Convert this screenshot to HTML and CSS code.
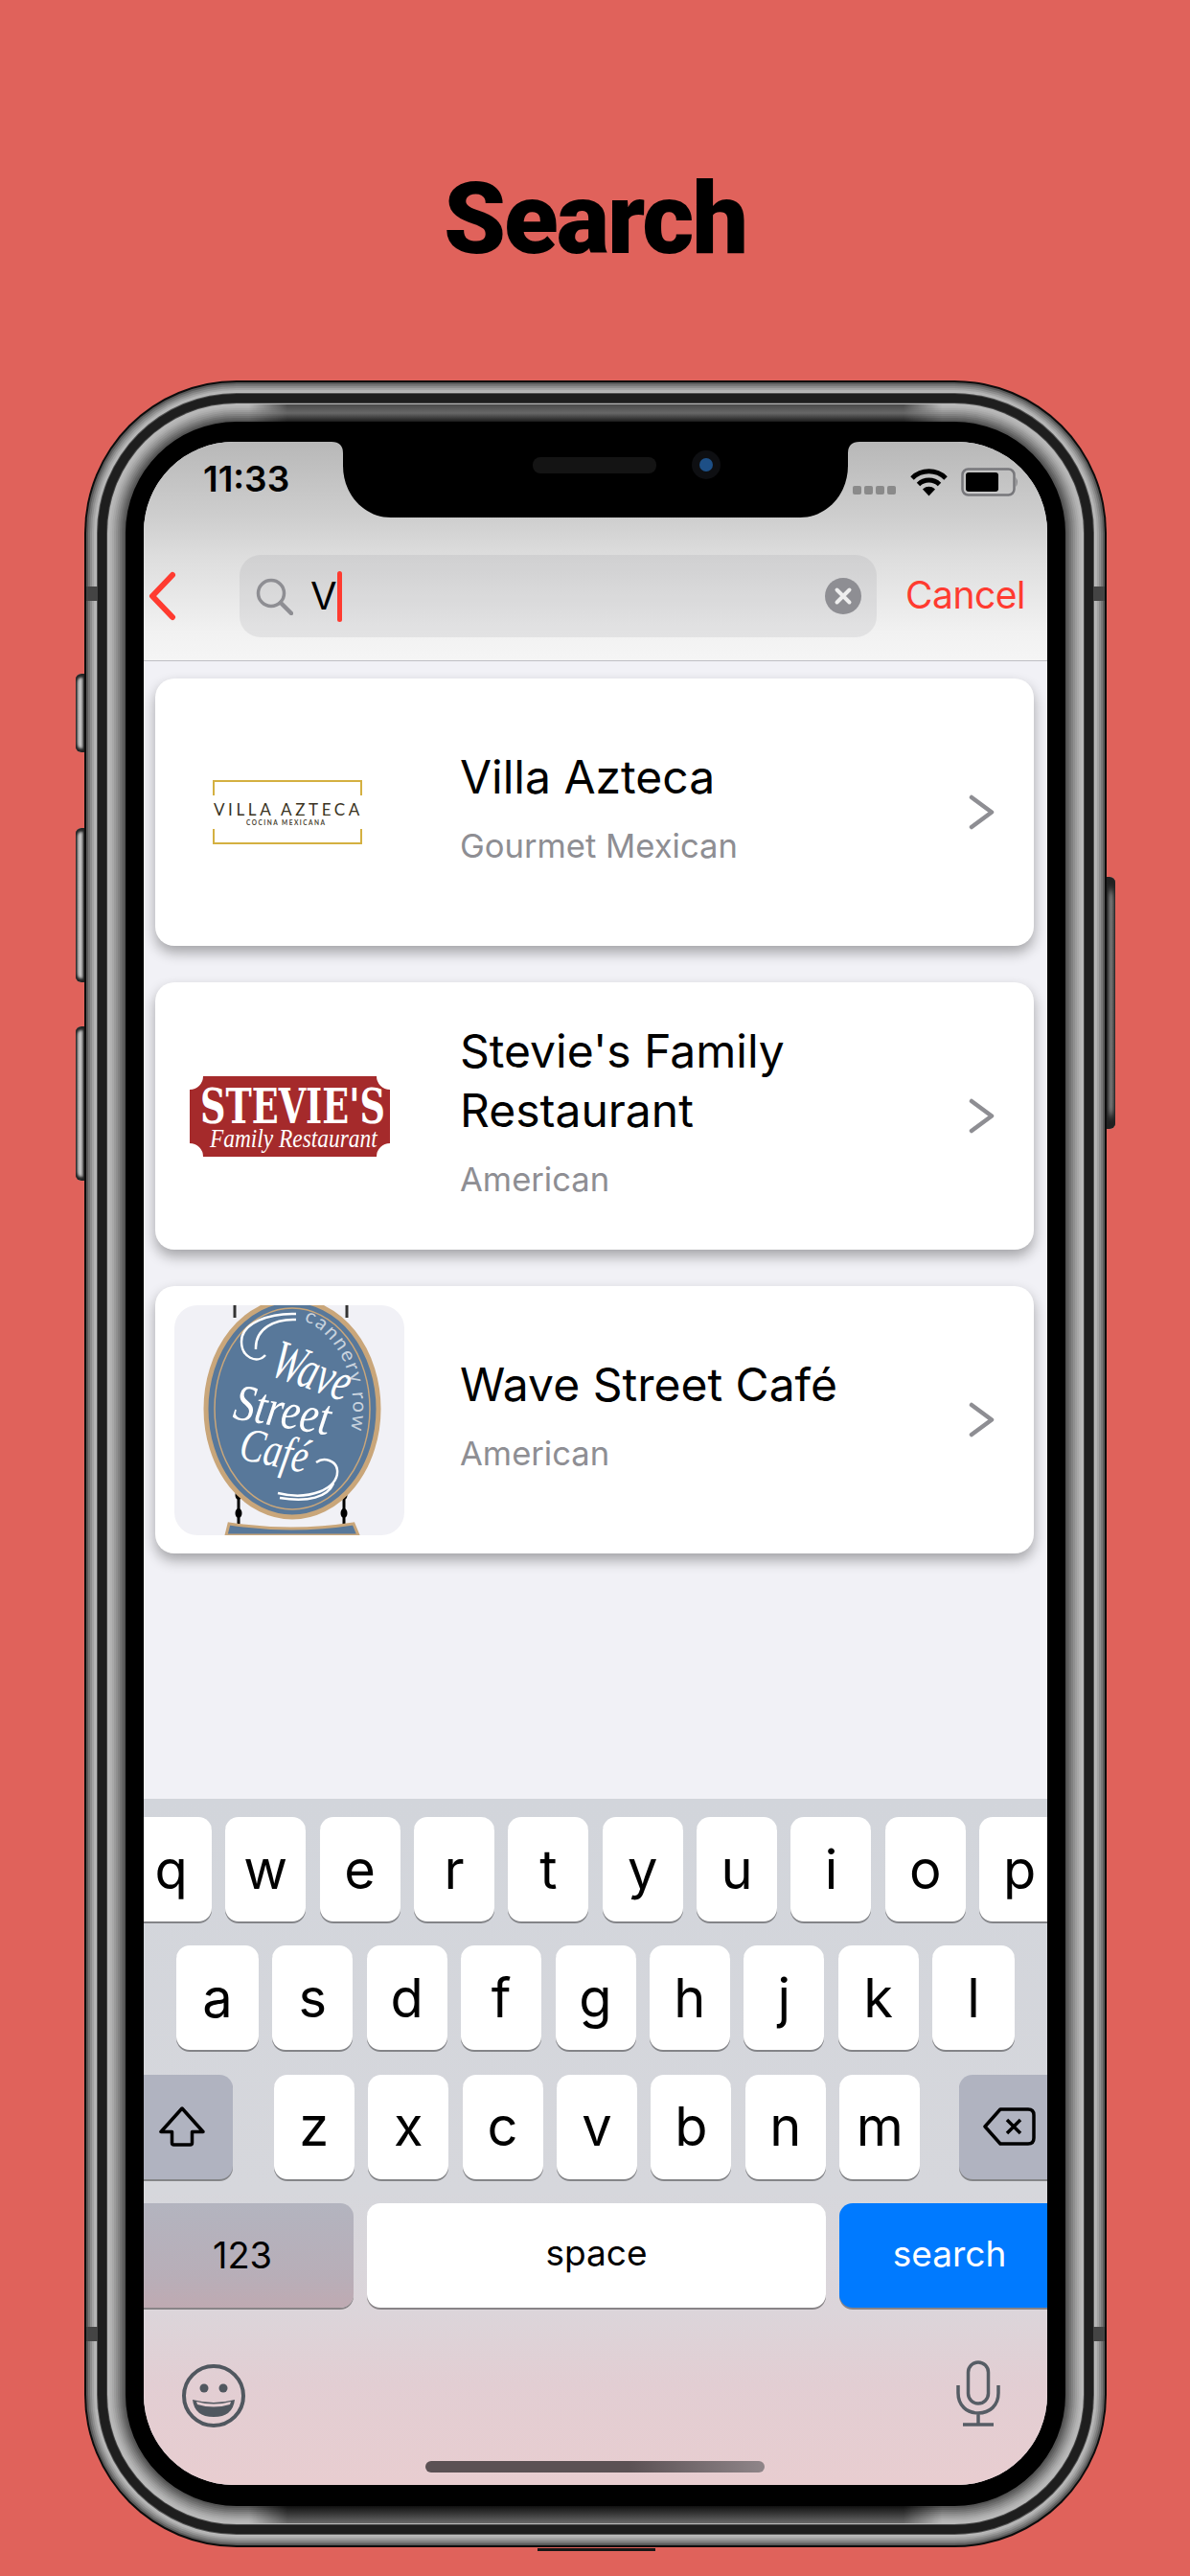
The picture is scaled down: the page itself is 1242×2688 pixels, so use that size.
FILE: index.html
```html
<!DOCTYPE html>
<html lang="en">
<head>
<meta charset="utf-8">
<title>Search</title>
<link rel="stylesheet" href="styles.css">
</head>
<body>
<h1 class="headline">Search</h1>
<div class="phone">
  <span class="hw hw-b1"></span><span class="hw hw-b2"></span><span class="hw hw-b3"></span><span class="hw hw-power"></span>
  <span class="ant ant-tl"></span><span class="ant ant-tr"></span><span class="ant ant-bl"></span><span class="ant ant-br"></span>
  <span class="foot"></span>
  <div class="bezel">
    <div class="screen">
      <svg class="notch" width="563" height="79" viewBox="0 0 563 79"><path d="M0 0H6Q18 0 18 12V25C18 55 40 79 68 79H495C523 79 545 55 545 25V12Q545 0 557 0H563Z" fill="#000"/><rect x="216" y="16" width="129" height="17" rx="8" fill="#141414"/><circle cx="397" cy="24" r="15" fill="#0e0f12"/><circle cx="397" cy="24" r="7" fill="#1d4f86"/></svg>
      <header class="nav">
        <div class="status">
          <span class="time">11:33</span>
          <div class="status-icons">
            <div class="signal"><i></i><i></i><i></i><i></i></div>
            <svg class="wifi" width="39" height="30" viewBox="0 0 39 30"><path d="M2 11A25 25 0 0 1 37 11" fill="none" stroke="#000" stroke-width="5"/><path d="M8.5 17.5A16 16 0 0 1 30.5 17.5" fill="none" stroke="#000" stroke-width="5"/><path d="M13 22.5A9 9 0 0 1 26 22.5L19.5 29.5Z" fill="#000"/></svg>
            <svg class="battery" width="60" height="30" viewBox="0 0 60 30"><rect x="1.5" y="1.5" width="54" height="27" rx="6" fill="none" stroke="#77777b" stroke-width="2.5"/><rect x="5" y="5" width="34" height="20" rx="3" fill="#000"/><path d="M57.5 10Q60 15 57.5 20Z" fill="#77777b"/></svg>
          </div>
        </div>
        <div class="searchrow">
          <svg class="back" width="29" height="52" viewBox="0 0 29 52"><path d="M25 4L4 26L25 48" fill="none" stroke="#ff3b30" stroke-width="6" stroke-linecap="round" stroke-linejoin="round"/></svg>
          <div class="searchbar">
            <svg class="glass" width="39" height="39" viewBox="0 0 39 39"><circle cx="16" cy="16" r="13.5" fill="none" stroke="#8e8e93" stroke-width="3.5"/><path d="M26 26L37 37" stroke="#8e8e93" stroke-width="4.5" stroke-linecap="round"/></svg>
            <span class="query">V</span><span class="caret"></span>
            <svg class="clear" width="38" height="38" viewBox="0 0 38 38"><circle cx="19" cy="19" r="19" fill="#8e8e93"/><path d="M12.5 12.5L25.5 25.5M25.5 12.5L12.5 25.5" stroke="#eee" stroke-width="4" stroke-linecap="round"/></svg>
          </div>
          <span class="cancel">Cancel</span>
        </div>
      </header>

      <main class="list">
        <article class="card">
          <div class="thumb">
            <svg class="logo-villa" width="165" height="67" viewBox="0 0 165 67"><path d="M1 16V1H155V16M1 51V66H155V51" fill="none" stroke="#d4b041" stroke-width="2"/><text class="villa-a" x="1" y="37">VILLA AZTECA</text><text class="villa-b" x="35" y="47">COCINA MEXICANA</text></svg>
          </div>
          <div class="info"><h2 class="name">Villa Azteca</h2><p class="kind">Gourmet Mexican</p></div>
          <svg class="more" width="27" height="37" viewBox="0 0 27 37"><path d="M3 3L24 18.500L3 34" fill="none" stroke="#8e8e93" stroke-width="4.500" stroke-linecap="round" stroke-linejoin="round"/></svg>
        </article>

        <article class="card">
          <div class="thumb">
            <svg width="209" height="84" viewBox="0 0 209 84"><path d="M14 0H195A14 14 0 0 0 209 14V70A14 14 0 0 0 195 84H14A14 14 0 0 0 0 70V14A14 14 0 0 0 14 0Z" fill="#a52a2b"/><text class="stevie-a" transform="translate(11 49) scale(.733 1)">STEVIE'S</text><text class="stevie-b" transform="translate(21 74) scale(.866 1)">Family Restaurant</text></svg>
          </div>
          <div class="info"><h2 class="name">Stevie's Family Restaurant</h2><p class="kind">American</p></div>
          <svg class="more" width="27" height="37" viewBox="0 0 27 37"><path d="M3 3L24 18.500L3 34" fill="none" stroke="#8e8e93" stroke-width="4.500" stroke-linecap="round" stroke-linejoin="round"/></svg>
        </article>

        <article class="card">
          <div class="thumb thumb-tile">
            <svg width="240" height="240" viewBox="0 0 240 240">
              <path d="M63 0V13M180 0V13" stroke="#333" stroke-width="3"/>
              <path d="M67 190V228M177 190V228" stroke="#000" stroke-width="3"/>
              <ellipse cx="67" cy="198" rx="3.500" ry="5"/><ellipse cx="67" cy="217" rx="3.500" ry="5"/><ellipse cx="177" cy="198" rx="3.500" ry="5"/><ellipse cx="177" cy="217" rx="3.500" ry="5"/>
              <path d="M54 240L57 228Q122 238 187 228L192 240Z" fill="#58789a" stroke="#c9a67a" stroke-width="3"/>
              <ellipse cx="123" cy="108" rx="90" ry="113" fill="#58789a" stroke="#c9a67a" stroke-width="5"/>
              <ellipse cx="123" cy="108" rx="81" ry="105" fill="none" stroke="#c9a67a" stroke-width="1.500"/>
              <path id="wave-arc" d="M135 16A72 94 0 0 1 183 135" fill="none"/>
              <text class="wave-arc"><textPath href="#wave-arc">cannery row</textPath></text>
              <path d="M127 9C100 8 70 18 70 38C70 54 86 62 95 52M127 15C105 14 84 24 85 46" fill="none" stroke="#fff" stroke-width="2.500"/>
              <path d="M108 196C140 204 172 192 170 172C169 162 156 158 148 164M110 201C140 206 160 200 166 186" fill="none" stroke="#fff" stroke-width="2.500"/>
              <text class="wave-script wave-l1" transform="translate(98 72) rotate(20) scale(.68 1)">Wave</text>
              <text class="wave-script wave-l2" transform="translate(60 118) rotate(10) scale(.82 1)">Street</text>
              <text class="wave-script wave-l3" transform="translate(66 160) rotate(12) scale(.76 1)">Café</text>
            </svg>
          </div>
          <div class="info"><h2 class="name">Wave Street Café</h2><p class="kind">American</p></div>
          <svg class="more" width="27" height="37" viewBox="0 0 27 37"><path d="M3 3L24 18.500L3 34" fill="none" stroke="#8e8e93" stroke-width="4.500" stroke-linecap="round" stroke-linejoin="round"/></svg>
        </article>
      </main>

      <section class="keyboard">
        <div class="row">
          <span class="key">q</span><span class="key">w</span><span class="key">e</span><span class="key">r</span><span class="key">t</span><span class="key">y</span><span class="key">u</span><span class="key">i</span><span class="key">o</span><span class="key">p</span>
        </div>
        <div class="row">
          <span class="key key-edge">a</span><span class="key">s</span><span class="key">d</span><span class="key">f</span><span class="key">g</span><span class="key">h</span><span class="key">j</span><span class="key">k</span><span class="key key-edge">l</span>
        </div>
        <div class="row">
          <span class="key key-mod key-shift"><svg width="48" height="42" viewBox="0 0 48 42"><path d="M24 2L2 26.500H13.500V38Q13.500 40 15.500 40H32.500Q34.500 40 34.500 38V26.500H46Z" fill="none" stroke="#000" stroke-width="3.500" stroke-linejoin="round"/></svg></span>
          <span class="key">z</span><span class="key">x</span><span class="key">c</span><span class="key">v</span><span class="key">b</span><span class="key">n</span><span class="key">m</span>
          <span class="key key-mod key-del"><svg width="55" height="40" viewBox="0 0 55 40"><path d="M18 2H47Q53 2 53 8V32Q53 38 47 38H18L2 20Z" fill="none" stroke="#000" stroke-width="3.500" stroke-linejoin="round"/><path d="M25 13L39 27M39 13L25 27" stroke="#000" stroke-width="3.500"/></svg></span>
        </div>
        <div class="row">
          <span class="key key-mod key-num">123</span>
          <span class="key key-space">space</span>
          <span class="key key-go">search</span>
        </div>
        <div class="kb-foot">
          <svg width="68" height="68" viewBox="0 0 68 68"><circle cx="34" cy="34" r="31" fill="none" stroke="#50575f" stroke-width="4"/><circle cx="24" cy="26" r="4.500" fill="#50575f"/><circle cx="44" cy="26" r="4.500" fill="#50575f"/><path d="M12 38Q34 44 56 38Q54 56 34 56Q14 56 12 38Z" fill="#50575f"/><path d="M16 40Q34 45 52 40L51 43Q34 48 17 43Z" fill="#e4ced2"/></svg>
          <svg class="mic" width="46" height="70" viewBox="0 0 46 70"><rect x="12.500" y="2" width="21" height="43" rx="10.500" fill="none" stroke="#565d65" stroke-width="3.500"/><path d="M2 26V34C2 47 11 55 23 55C35 55 44 47 44 34V26M23 55V67M7 67H39" fill="none" stroke="#565d65" stroke-width="3.500"/></svg>
        </div>
        <span class="homebar"></span>
      </section>
    </div>
  </div>
</div>
</body>
</html>
```
FILE: styles.css
```css
* { box-sizing: border-box; }
html, body { margin: 0; padding: 0; }
body {
  width: 1242px;
  height: 2688px;
  overflow: hidden;
  background: #e0625b;
  font-family: Inter, "Liberation Sans", sans-serif;
  color: #000;
}
.headline {
  margin: 0;
  height: 440px;
  padding-top: 169px;
  text-align: center;
  font-family: Roboto, sans-serif;
  font-weight: 900;
  font-size: 104px;
  line-height: 120px;
  letter-spacing: -2px;
}
.phone { position: relative; width: 981px; margin-left: 131px; }
.bezel {
  position: relative;
  background: #000;
  border-style: solid;
  border-color: #000;
  border-width: 21px 19px 22px;
  border-radius: 116px;
  box-shadow:
    0 0 0 2px #555, 0 0 0 4px #636363, 0 0 0 6px #727272, 0 0 0 8px #818181,
    0 0 0 10px #8f8f8f, 0 0 0 12px #9c9c9c, 0 0 0 14px #a8a8a8, 0 0 0 16px #b2b2b2,
    0 0 0 19px #b8b8b8, 0 0 0 20px #444, 0 0 0 29px #1e1e1e, 0 0 0 30px #555,
    0 0 0 31px #bbb, 0 0 0 33px #b4b4b4, 0 0 0 35px #a3a3a3, 0 0 0 37px #8e8e8e,
    0 0 0 39px #777, 0 0 0 41px #5a5a5a, 0 0 0 43px #0c0c0c;
}
.bezel::before, .bezel::after {
  content: "";
  position: absolute;
  left: 110px;
  right: 110px;
  height: 18px;
  -webkit-mask-image: linear-gradient(90deg, transparent, #000 40px, #000 calc(100% - 40px), transparent);
  mask-image: linear-gradient(90deg, transparent, #000 40px, #000 calc(100% - 40px), transparent);
}
.bezel::before { top: -39px; background: linear-gradient(#4a4a4a, #676767 50%, #1c1c1c); }
.bezel::after { bottom: -40px; height: 18px; background: linear-gradient(#111, #3c3c3c 50%, #6a6a6a); }

.screen {
  position: relative;
  width: 943px;
  height: 2132px;
  border-radius: 94px;
  overflow: hidden;
  display: flex;
  flex-direction: column;
  background: #f1f1f6;
}
.notch { position: absolute; top: 0; left: 190px; z-index: 3; }

.hw { position: absolute; width: 9px; background: linear-gradient(90deg, #333, #aaa 30%, #c8c8c8 55%, #888 85%, #222); }
.hw-b1, .hw-b2, .hw-b3 { left: -52px; border-radius: 6px 0 0 6px; box-shadow: inset 0 4px 3px #222, inset 0 -4px 3px #222; }
.hw-b1 { top: 263px; height: 82px; }
.hw-b2 { top: 424px; height: 161px; }
.hw-b3 { top: 631px; height: 161px; }
.hw-power { right: -52px; top: 475px; height: 263px; border-radius: 0 6px 6px 0; box-shadow: inset 0 14px 8px #222, inset 0 -14px 8px #222; }
.ant { position: absolute; z-index: 2; width: 12px; height: 15px; background: #444; }
.ant-tl, .ant-bl { left: -41px; }
.ant-tr, .ant-br { right: -41px; }
.ant-tl, .ant-tr { top: 172px; }
.ant-bl, .ant-br { top: 1988px; }
.foot { position: absolute; left: 430px; top: 2219px; width: 123px; height: 3px; background: #161616; }

.nav {
  height: 229px;
  flex: none;
  border-bottom: 1px solid #bfbfc4;
  background: linear-gradient(#b8b8b8, #d0d0d0 37%, #dddddd 52%, #f2f2f2 88%, #f5f5f5);
}
.status {
  height: 118px;
  display: flex;
  justify-content: space-between;
  padding: 17px 30px 0 62px;
}
.time { font-size: 37px; line-height: 44px; font-weight: 600; letter-spacing: 0; }
.status-icons { display: flex; align-items: flex-end; height: 40px; margin-top: 0; }
.signal { display: flex; gap: 3px; margin: 0 15px 2px 0; }
.signal i { width: 9px; height: 9px; border-radius: 2px; background: #8a8a8a; }
.wifi { margin-right: 14px; }
.searchrow { display: flex; align-items: center; height: 86px; padding-left: 5px; }
.back { flex: none; }
.searchbar {
  width: 665px;
  height: 86px;
  margin-left: 66px;
  padding: 0 16px 0 17px;
  border-radius: 22px;
  background: rgba(120, 120, 128, .13);
  display: flex;
  align-items: center;
}
.query { margin-left: 18px; font-size: 40px; line-height: 50px; }
.caret { width: 5px; height: 53px; margin-left: 0; border-radius: 3px; background: #ff3b30; }
.clear { margin-left: auto; }
.cancel { margin: 0 0 3px 30px; font-size: 39px; line-height: 50px; letter-spacing: -.5px; color: #ff3b30; }

.list {
  flex: 1;
  padding: 18px 14px 0 12px;
  display: flex;
  flex-direction: column;
  gap: 38px;
}
.card {
  height: 279px;
  flex: none;
  display: flex;
  align-items: center;
  padding: 0 41px 0 20px;
  border-radius: 20px;
  background: #fff;
  box-shadow: 0 7px 14px rgba(0, 0, 0, .32);
}
.thumb { width: 240px; height: 240px; flex: none; display: flex; align-items: center; justify-content: center; }
.thumb-tile { background: #f1f1f6; border-radius: 24px; overflow: hidden; }
.logo-villa { margin-left: 5px; }
.info { flex: 1; margin-left: 58px; min-width: 0; padding-bottom: 12px; }
.name { margin: 0; width: 400px; font-size: 48px; line-height: 62px; font-weight: 400; }
.kind { margin: 18px 0 0; font-size: 34.600px; line-height: 44px; color: #8e8e93; }
.more { flex: none; }

.villa-a { font-family: Lato, sans-serif; font-size: 17px; letter-spacing: 3.600px; fill: #3a331e; }
.villa-b { font-family: Lato, sans-serif; font-size: 6.500px; font-weight: 700; letter-spacing: 1.500px; fill: #4a4433; }
.stevie-a { font-family: "DejaVu Serif", serif; font-weight: 700; font-size: 50px; fill: #fff; }
.stevie-b { font-family: "Liberation Serif", serif; font-style: italic; font-size: 27px; fill: #fff; }
.wave-arc { font-family: Lato, sans-serif; font-size: 21px; letter-spacing: 2px; fill: #c9d3de; }
.wave-script { font-family: "Liberation Serif", serif; font-style: italic; fill: #fff; }
.wave-l1 { font-size: 58px; }
.wave-l2 { font-size: 54px; }
.wave-l3 { font-size: 50px; }

.keyboard {
  position: relative;
  height: 716px;
  flex: none;
  padding-top: 19px;
  display: flex;
  flex-direction: column;
  gap: 25.300px;
  background: linear-gradient(#d2d5db, #d6d7dc 57%, #dcd5da 75%, #e2ced3 85%, #e8cdd0);
}
.row { display: flex; justify-content: center; gap: 14.400px; height: 109px; flex: none; }
.key {
  width: 84px;
  flex: none;
  display: flex;
  align-items: center;
  justify-content: center;
  border-radius: 14px;
  background: #fff;
  box-shadow: 0 2px 0 rgba(0, 0, 0, .38);
  font-size: 56px;
}
.key-edge { width: 86px; }
.key-mod { background: #b0b3c0; }
.key-shift { width: 106px; margin-right: 28.600px; }
.key-del { width: 105px; margin-left: 26.600px; }
.key-num { width: 232px; font-size: 38px; background: linear-gradient(#b3b4bf, #b8aeb8 70%, #bfaab2); }
.key-space { width: 478.200px; font-size: 37px; padding-bottom: 5px; }
.key-go { width: 230px; background: #007aff; color: #fff; font-size: 37px; padding-bottom: 4px; }
.kb-foot { display: flex; justify-content: space-between; align-items: flex-start; padding: 33px 49px 0 39px; }
.mic { margin-top: -3px; }
.homebar {
  position: absolute;
  left: 294px;
  bottom: 13px;
  width: 354px;
  height: 12px;
  border-radius: 6px;
  background: linear-gradient(90deg, #5b5154, #5b5154 60%, #8f8589);
}
```
